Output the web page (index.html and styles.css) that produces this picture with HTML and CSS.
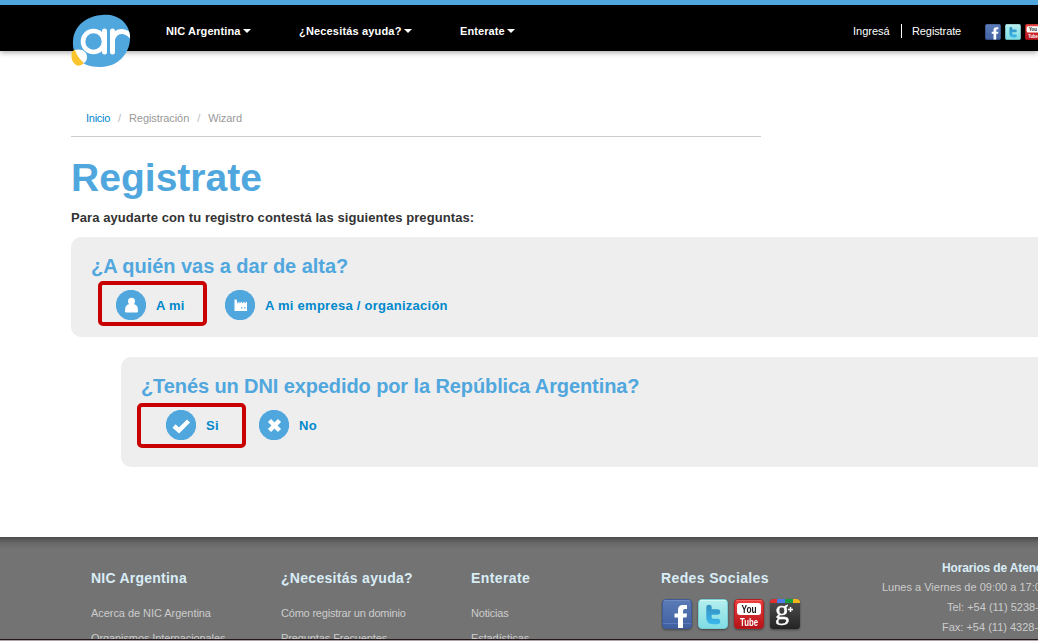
FILE: index.html
```html
<!DOCTYPE html>
<html lang="es">
<head>
<meta charset="utf-8">
<title>Registrate</title>
<link rel="stylesheet" href="styles.css">
</head>
<body>
<svg class="defs" width="0" height="0" aria-hidden="true">
  <defs>
    <linearGradient id="gf" x1="0" y1="0" x2="0" y2="1"><stop offset="0" stop-color="#5c7cb8"/><stop offset="1" stop-color="#3f5f9f"/></linearGradient>
    <linearGradient id="gt" x1="0" y1="0" x2="0" y2="1"><stop offset="0" stop-color="#b5eeee"/><stop offset="1" stop-color="#7fdde4"/></linearGradient>
    <linearGradient id="gb" gradientUnits="userSpaceOnUse" x1="0" y1="6" x2="0" y2="26"><stop offset="0" stop-color="#328ebd"/><stop offset="1" stop-color="#3bb9ef"/></linearGradient>
    <linearGradient id="gy" x1="0" y1="0" x2="0" y2="1"><stop offset="0" stop-color="#ee4141"/><stop offset="1" stop-color="#b31217"/></linearGradient>
    <linearGradient id="gg" x1="0" y1="0" x2="0" y2="1"><stop offset="0" stop-color="#505050"/><stop offset="1" stop-color="#242424"/></linearGradient>
    <clipPath id="tile"><rect width="30" height="30" rx="3.5"/></clipPath>
    <clipPath id="blob"><path d="M31 1C44-1 58 7 59 22C60 39 47 53 30 53C12 54 1 44 2 27C3 12 15 2 31 1Z"/></clipPath>
    <symbol id="facebook" viewBox="0 0 30 30">
      <rect x=".5" y=".5" width="29" height="29" rx="3.5" fill="url(#gf)" stroke="#3d5b98"/>
      <path d="M2 1.5h26" stroke="#7c98c8" stroke-opacity=".6"/><path d="M1 24.5h28" stroke="#6b8bc8" stroke-opacity=".6"/>
      <path d="M16 29V18.500H12.500V14.500H16V11Q16 6 21 6H25V10H22.800Q21 10 21 12V14.500H25L24.500 18.500H21V29Z" fill="#fff"/>
    </symbol>
    <symbol id="twitter" viewBox="0 0 30 30">
      <rect x=".5" y=".5" width="29" height="29" rx="3.5" fill="url(#gt)" stroke="#76cdd3"/>
      <path d="M2 1.5h26" stroke="#d1f7f5"/>
      <path d="M11 8.500V18.500Q11 22.500 15 22.500H19.500M11.500 13H19.500" fill="none" stroke="url(#gb)" stroke-width="5.400" stroke-linecap="round" stroke-linejoin="round"/>
    </symbol>
    <symbol id="youtube" viewBox="0 0 30 30">
      <rect x=".5" y=".5" width="29" height="29" rx="3.5" fill="url(#gy)" stroke="#b51d20"/>
      <path d="M2 1.5h26" stroke="#ff7772" stroke-opacity=".6"/>
      <rect x="3" y="4" width="24" height="12" rx="3" fill="#fff"/>
      <text x="15" y="14" text-anchor="middle" textLength="15" lengthAdjust="spacingAndGlyphs" class="yt-text" fill="#151515">You</text>
      <text x="15" y="27" text-anchor="middle" textLength="18" lengthAdjust="spacingAndGlyphs" class="yt-text" fill="#fff">Tube</text>
    </symbol>
    <symbol id="google" viewBox="0 0 30 30">
      <g clip-path="url(#tile)"><rect width="30" height="30" fill="url(#gg)"/>
      <path d="M0 0h7v4H0z" fill="#de3030"/><path d="M7 0h8v4H7z" fill="#4a7ceb"/><path d="M15 0h8v4h-8z" fill="#1a9d3e"/><path d="M23 0h7v4h-7z" fill="#f5b51c"/></g>
      <text x="5" y="20" class="g-text" fill="#fff">g</text>
      <path d="M18 10.500h5M20.500 8v5" stroke="#fff" stroke-width="1.500"/>
    </symbol>
  </defs>
</svg>

<header class="topbar">
  <a class="logo" aria-label="NIC Argentina">
    <svg width="60" height="54" viewBox="0 0 60 54">
      <path d="M31 1C44-1 58 7 59 22C60 39 47 53 30 53C12 54 1 44 2 27C3 12 15 2 31 1Z" fill="#50a7de"/>
      <path d="M1 38Q3 35 7 36Q10 47 13 49Q9 53 5 51Q-1 47 1 38Z" fill="#fac52c"/>
      <path d="M4 36C11 34 16 38 16 43Q16 47 13 49Q6 43 4 36Z" fill="#fff"/>
      <g clip-path="url(#blob)" fill="none" stroke="#fff">
        <circle cx="22.500" cy="27.500" r="10.500" stroke-width="4.600"/>
        <path d="M33.500 17V38M41.500 38V17M41.500 25Q44 17.500 51 17.500Q55.500 17.500 60 22" stroke-width="5" stroke-linecap="round"/>
      </g>
    </svg>
  </a>
  <nav class="mainnav">
    <a class="nav-nic">NIC Argentina<i class="caret"></i></a>
    <a class="nav-help">¿Necesitás ayuda?<i class="caret"></i></a>
    <a class="nav-news">Enterate<i class="caret"></i></a>
  </nav>
  <div class="account"><a class="login">Ingresá</a><a class="signup">Registrate</a></div>
  <div class="minisocial">
    <svg><use href="#facebook"/></svg><svg><use href="#twitter"/></svg><svg><use href="#youtube"/></svg>
  </div>
</header>

<main class="content">
  <div class="breadcrumb"><a>Inicio</a><i>/</i><span>Registración</span><i>/</i><span>Wizard</span></div>
  <h1>Registrate</h1>
  <p class="intro">Para ayudarte con tu registro contestá las siguientes preguntas:</p>

  <section class="question first">
    <h2>¿A quién vas a dar de alta?</h2>
    <div class="options">
      <a class="option me"><svg width="30" height="30"><circle cx="15" cy="15" r="15.200" fill="#50a7de"/><circle cx="15.500" cy="11.300" r="3.500" fill="#fff"/><path d="M9 21.500Q8.500 14.500 13.500 14H17.500Q22.500 14.500 22 21.500Q22 22.500 20.500 22.500H10.500Q9 22.500 9 21.500Z" fill="#fff"/></svg><span>A mi</span></a>
      <a class="option"><svg width="30" height="30"><circle cx="15" cy="15" r="15.200" fill="#50a7de"/><path d="M9.500 21V9.500H11.500L12.500 13.500L14.500 11.500V13.500L17 11.500V13.500L19.500 11.500V13.500L22 11.500V21Z" fill="#fff"/><path d="M16 17h1.500v1.500H16zM19 17h1.500v1.500H19z" fill="#79bde7"/></svg><span>A mi empresa / organización</span></a>
    </div>
    <div class="mark"></div>
  </section>

  <section class="question second">
    <h2>¿Tenés un DNI expedido por la República Argentina?</h2>
    <div class="options">
      <a class="option yes"><svg width="30" height="30"><circle cx="15" cy="15" r="15.200" fill="#50a7de"/><path d="M8 16L13 20.500L22.500 11" fill="none" stroke="#fff" stroke-width="4.400"/></svg><span>Si</span></a>
      <a class="option"><svg width="30" height="30"><circle cx="15" cy="15" r="15.200" fill="#50a7de"/><path d="M10.500 10.500L20.500 20.500M20.500 10.500L10.500 20.500" stroke="#fff" stroke-width="4.400"/></svg><span>No</span></a>
    </div>
    <div class="mark"></div>
  </section>
</main>

<footer class="footer">
  <div class="col"><h3 class="f-nic">NIC Argentina</h3><a class="f-about">Acerca de NIC Argentina</a><a class="f-org">Organismos Internacionales</a></div>
  <div class="col"><h3 class="f-help">¿Necesitás ayuda?</h3><a class="f-domain">Cómo registrar un dominio</a><a class="f-faq">Preguntas Frecuentes</a></div>
  <div class="col"><h3 class="f-news">Enterate</h3><a class="f-notes">Noticias</a><a class="f-stats">Estadísticas</a></div>
  <div class="col social"><h3 class="f-social">Redes Sociales</h3>
    <div class="icons"><svg><use href="#facebook"/></svg><svg><use href="#twitter"/></svg><svg><use href="#youtube"/></svg><svg><use href="#google"/></svg></div>
  </div>
  <div class="contact">
    <strong>Horarios de Atención</strong>
    <span class="hours">Lunes a Viernes de 09:00 a 17:00</span>
    <span class="tel">Tel: +54 (11) 5238-</span>
    <span class="fax">Fax: +54 (11) 4328-</span>
  </div>
</footer>
</body>
</html>
```
FILE: styles.css
```css
* { box-sizing: border-box; }
body {
  margin: 0;
  width: 1038px;
  height: 641px;
  overflow: hidden;
  display: flex;
  flex-direction: column;
  background: #fff;
  color: #333;
  font: 11px/20px "Liberation Sans", Arial, sans-serif;
}
.defs { position: absolute; }
.topbar {
  flex: none;
  display: flex;
  height: 51px;
  padding-left: 71px;
  background: #000;
  border-top: 5px solid #50a7de;
  box-shadow: 0 1px 6px rgba(0, 0, 0, .4);
  color: #fff;
  white-space: nowrap;
}
.logo { flex: none; width: 60px; height: 54px; margin: 9px 35px 0 0; }
.logo svg { display: block; }
.mainnav { display: flex; flex: none; width: 687px; padding-top: 16px; font-weight: bold; }
.mainnav a { display: flex; align-items: center; height: 20px; }
.nav-nic { width: 133px; letter-spacing: .12px; }
.nav-help { width: 161px; letter-spacing: .17px; }
.nav-news { letter-spacing: .1px; }
.caret {
  border: 4px solid transparent;
  border-top-color: #fff;
  border-bottom: 0;
  margin-left: 2px;
  margin-top: -1px;
}
.account { display: flex; padding-top: 16px; width: 132px; flex: none; }
.login { width: 49px; height: 14px; line-height: 14px; margin-top: 3px; border-right: 1px solid #fff; }
.signup { margin-left: 10px; letter-spacing: -.1px; }
.minisocial { display: flex; gap: 4px; padding-top: 19px; flex: none; }
.minisocial svg { width: 16px; height: 16px; flex: none; }
.yt-text { font: bold 11px "Liberation Sans", sans-serif; }
.g-text { font: 28px "Liberation Serif", serif; stroke: #fff; stroke-width: .4px; }

.content { flex: none; height: 486px; padding: 57px 0 0 71px; }
.breadcrumb {
  display: flex;
  width: 690px;
  height: 29px;
  padding-left: 15px;
  border-bottom: 1px solid #ccc;
  color: #999;
}
.breadcrumb a { width: 24px; color: #08c; letter-spacing: -.25px; }
.breadcrumb span { letter-spacing: -.08px; }
.breadcrumb i { width: 19px; text-align: center; font-style: normal; color: #bbb; }
h1, h2, h3, p { margin: 0; }
h1 { margin: 21px 0 0; color: #50a7de; font-size: 39px; line-height: 40px; letter-spacing: .03px; }
.intro { margin-top: 10px; font-size: 13px; font-weight: bold; line-height: 20px; letter-spacing: .08px; }
.question { position: relative; margin-right: -20px; background: #eee; border-radius: 10px; white-space: nowrap; }
.question h2 { color: #50a7de; font-size: 20px; line-height: 40px; letter-spacing: -.04px; }
.question.second h2 { letter-spacing: -.1px; }
.first { height: 100px; margin-top: 9px; padding: 9px 20px 0; }
.second { height: 110px; margin: 20px -20px 0 50px; padding: 9px 20px 0; }
.options { display: flex; margin-top: 4px; padding-left: 25px; }
.option { display: flex; align-items: center; color: #08c; font-size: 13px; font-weight: bold; letter-spacing: .26px; }
.option svg { margin-right: 10px; }
.option span { padding-top: 2px; }
.me { width: 109px; }
.yes { width: 93px; }
.mark { position: absolute; width: 109px; height: 45px; border: 4px solid #c80000; border-radius: 5px; }
.first .mark { left: 27px; top: 44px; }
.second .mark { left: 16px; top: 46px; }

.footer {
  flex: none;
  display: flex;
  height: 104px;
  padding-left: 91px;
  overflow: hidden;
  background: linear-gradient(#4c4c4c, #686868 6px, #737373 12px);
  color: #ccc;
  border-bottom: 1px solid #b3a5a5;
  box-shadow: inset 0 -1px #211719;
  white-space: nowrap;
}
.col { flex: none; width: 190px; height: 102px; padding-top: 31px; overflow: hidden; }
.col h3 { margin-bottom: 15px; color: #d9edf7; font-size: 14px; line-height: 20px; letter-spacing: .24px; }
.col .f-help { letter-spacing: .3px; }
.col .f-news { letter-spacing: .4px; }
.col .f-social { letter-spacing: .37px; }
.col a { display: block; height: 25px; line-height: 20px; letter-spacing: -.1px; }
.col .f-about { letter-spacing: -.05px; }
.col .f-domain { letter-spacing: -.2px; }
.col .f-notes { letter-spacing: -.2px; }
.social .icons { display: flex; gap: 6px; margin-top: -4px; padding-left: 1px; }
.icons svg { width: 30px; height: 30px; filter: drop-shadow(0 1px 1px rgba(0, 0, 0, .4)); }
.contact { display: flex; flex-direction: column; padding-top: 20px; margin-left: 31px; }
.contact strong { margin-left: 60px; color: #d9edf7; font-size: 12px; letter-spacing: -.15px; padding-top: 1px; height: 20px; }
.tel { margin-left: 65px; }
.fax { margin-left: 60px; }
```
